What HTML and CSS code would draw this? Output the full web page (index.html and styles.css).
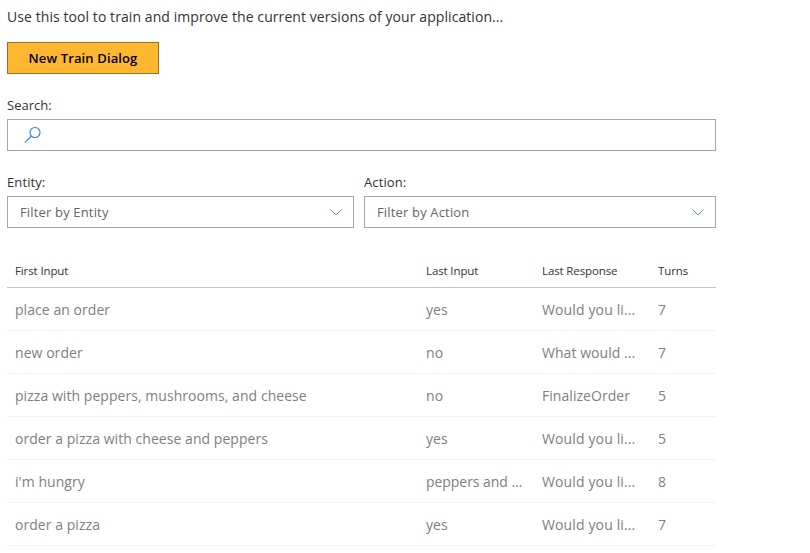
FILE: index.html
```html
<!DOCTYPE html>
<html lang="en">
<head>
<meta charset="utf-8">
<title>Train Dialogs</title>
<link rel="stylesheet" href="styles.css">
</head>
<body>
<main class="page">
  <p class="intro">Use this tool to train and improve the current versions of your application...</p>
  <button class="primary" type="button">New Train Dialog</button>
  <label class="label search-label" for="search">Search:</label>
  <div class="search">
    <svg class="search-icon" width="18" height="18" viewBox="0 0 18 18"><circle cx="11" cy="6.5" r="5"/><path d="M7.5 10 .8 16.7"/></svg>
    <input id="search" type="text">
  </div>
  <div class="filters">
    <div class="filter">
      <span class="label">Entity:</span>
      <div class="dropdown"><span>Filter by Entity</span><svg width="12" height="7" viewBox="0 0 12 7"><path d="M.5.5 6 6 11.5.5"/></svg></div>
    </div>
    <div class="filter">
      <span class="label">Action:</span>
      <div class="dropdown"><span>Filter by Action</span><svg width="12" height="7" viewBox="0 0 12 7"><path d="M.5.5 6 6 11.5.5"/></svg></div>
    </div>
  </div>
  <div class="list">
    <div class="row head"><span>First Input</span><span>Last Input</span><span>Last Response</span><span>Turns</span></div>
    <div class="row"><span>place an order</span><span>yes</span><span class="resp">Would you li...</span><span>7</span></div>
    <div class="row"><span>new order</span><span>no</span><span>What would ...</span><span>7</span></div>
    <div class="row"><span>pizza with peppers, mushrooms, and cheese</span><span>no</span><span>FinalizeOrder</span><span>5</span></div>
    <div class="row"><span>order a pizza with cheese and peppers</span><span>yes</span><span class="resp">Would you li...</span><span>5</span></div>
    <div class="row"><span>i'm hungry</span><span class="tight">peppers and ...</span><span class="resp">Would you li...</span><span>8</span></div>
    <div class="row"><span>order a pizza</span><span>yes</span><span class="resp">Would you li...</span><span>7</span></div>
  </div>
</main>
</body>
</html>
```
FILE: styles.css
```css
* { box-sizing: border-box; }
body {
  margin: 0;
  background: #fff;
  color: #333;
  font-family: "Open Sans", "Noto Sans", sans-serif;
}
.page { width: 709px; margin-left: 7px; padding-top: 7px; }
.intro { margin: 0 0 15px; font-size: 14px; line-height: 20px; letter-spacing: .075px; }
.primary {
  display: block;
  width: 152px;
  height: 32px;
  padding: 0;
  border: 1px solid #9c7022;
  background: #ffb630;
  color: #000;
  font: 600 13px/28px "Open Sans", sans-serif;
  letter-spacing: .13px;
}
.label { display: block; font-size: 13px; line-height: 20px; height: 24px; letter-spacing: .1px; }
.search-label { margin-top: 21px; letter-spacing: 0; }
.search {
  display: flex;
  align-items: center;
  height: 32px;
  padding-left: 16px;
  border: 1px solid #a6a6a6;
}
.search-icon { fill: none; stroke: #2f7fd4; stroke-width: 1.1; }
.search input { flex: 1; border: 0; outline: 0; background: none; }
.filters { display: grid; grid-template-columns: 347px 352px; gap: 10px; margin-top: 21px; }
.dropdown {
  display: flex;
  align-items: center;
  justify-content: space-between;
  height: 32px;
  padding: 0 11px 0 12px;
  border: 1px solid #a6a6a6;
  color: #666;
  font-size: 13px;
  letter-spacing: .16px;
}
.dropdown svg { fill: none; stroke: #5c96b8; }
.list { margin-top: 26px; }
.row {
  display: grid;
  grid-template-columns: 411px 116px 116px 50px;
  align-items: center;
  height: 43px;
  padding-left: 8px;
  border-bottom: 1px solid #f2f2f2;
  color: #808080;
  font-size: 14px;
  letter-spacing: .05px;
  white-space: nowrap;
}
.resp { letter-spacing: .13px; }
.tight { letter-spacing: -.05px; }
.head { height: 34px; border-color: #c4c4c4; color: #333; font-size: 11.5px; letter-spacing: -.12px; }
```
